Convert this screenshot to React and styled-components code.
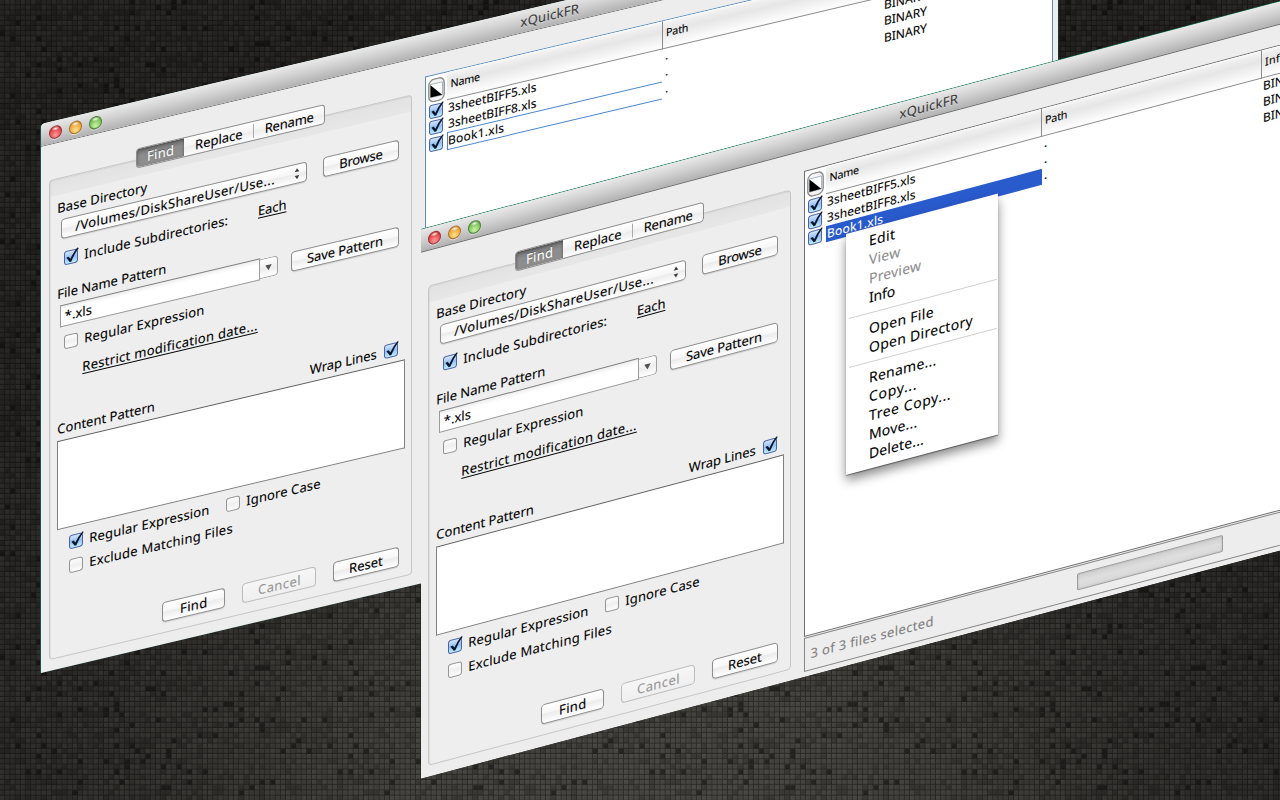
import React, { useLayoutEffect, useRef } from "react";
import styled, { createGlobalStyle, css } from "styled-components";

const GlobalStyle = createGlobalStyle`
  * { box-sizing: border-box; }
  html, body { margin: 0; padding: 0; background: #1b1a18; }
`;

const Desktop = styled.main`
  position: relative;
  width: 1280px;
  height: 800px;
  overflow: hidden;
  background: radial-gradient(ellipse 820px 640px at 50% 104%, #4b4a45 0%, #45443f 30%, #32312e 62%, #272523 100%);
  font-family: "Noto Sans", "Open Sans", sans-serif;
  font-size: 13px;
  line-height: 16px;
  color: #000;
`;

const Texture = styled.svg`
  position: absolute;
  inset: 0;
  display: block;
`;

const Window = styled.section`
  position: absolute;
  left: ${(p) => p.$x}px;
  top: ${(p) => p.$y}px;
  width: 1017px;
  height: 549px;
  display: flex;
  flex-direction: column;
  background: #ededed;
  border-radius: 4px 0 0 0;
  transform: skewY(-${(p) => p.$skew}deg);
  transform-origin: 0 0;
  ${(p) =>
    p.$front
      ? css`
          border-radius: 0;
          clip-path: inset(-1px 0 0 1px);
          box-shadow: 0 -1px 0 #24805f;
        `
      : css`
          box-shadow: -1px 0 0 #1c4f4a, 1px 0 0 #12382f;
        `}
`;

const TitleBar = styled.header`
  flex: none;
  height: 23px;
  position: relative;
  display: flex;
  align-items: center;
  justify-content: center;
  border-bottom: 1px solid #6c6c6c;
  border-radius: inherit;
  background: linear-gradient(#e9e9e9, #d2d2d2 45%, #b2b2b2);
  color: #3a3a3a;
  text-shadow: 0 1px 0 rgba(255, 255, 255, 0.4);
`;

const Lights = styled.div`
  position: absolute;
  left: 8px;
  top: 5px;
  display: flex;
  gap: 8px;
`;

const Light = styled.span`
  width: 12.5px;
  height: 12.5px;
  margin-right: -0.5px;
  border-radius: 50%;
  border: 1px solid ${(p) => p.$edge};
  background: radial-gradient(ellipse 4px 2px at 50% 18%, rgba(255, 255, 255, 0.95), rgba(255, 255, 255, 0) 100%),
    radial-gradient(circle at 50% 75%, ${(p) => p.$glow}, ${(p) => p.$base} 75%);
  box-shadow: 0 1px 0 rgba(255, 255, 255, 0.5);
`;

const Body = styled.div`
  flex: 1;
  display: flex;
  align-items: flex-start;
`;

const FormColumn = styled.div`
  width: 363px;
  margin-left: 8px;
  padding-top: 24px;
  display: flex;
  flex-direction: column;
`;

const Tabs = styled.nav`
  position: relative;
  z-index: 1;
  display: flex;
  width: 189px;
  height: 20px;
  margin: 0 0 -9px 87px;
  border: 1px solid #8d8d8d;
  border-radius: 4px;
  background: linear-gradient(#fff, #f3f3f3 50%, #ececec 51%, #fdfdfd);
  overflow: hidden;
`;

const Tab = styled.span`
  width: ${(p) => p.$w}px;
  display: flex;
  align-items: center;
  justify-content: center;
  padding-bottom: 1px;
  -webkit-text-stroke: 0.2px currentColor;
  ${(p) =>
    p.$active &&
    css`
      color: #fff;
      background: linear-gradient(#707070, #8c8c8c 40%, #8f8f8f);
      box-shadow: inset 0 1px 3px rgba(0, 0, 0, 0.45);
      text-shadow: 0 -1px 1px #555;
      -webkit-text-stroke: 0;
    `}
  ${(p) =>
    p.$divided &&
    css`
      background: linear-gradient(#aaa, #aaa) right center / 1px 14px no-repeat;
    `}
`;

const Group = styled.div`
  height: 480px;
  padding-top: 21px;
  border: 1px solid #c6c6c6;
  border-radius: 4px;
  box-shadow: inset 1px 1px 1px rgba(0, 0, 0, 0.06);
  background: linear-gradient(#e2e2e2, #e7e7e7) top / 100% 16px no-repeat #eee;
  display: flex;
  flex-direction: column;
`;

const Row = styled.div`
  flex: none;
  display: flex;
  align-items: center;
  height: ${(p) => p.$h || 16}px;
  margin-top: ${(p) => p.$mt || 0}px;
  padding-left: ${(p) => p.$pl || 7.3}px;
`;

const Spacer = styled.span`
  flex: none;
  width: ${(p) => p.$w}px;
`;

const TextBox = styled.span`
  flex: none;
  display: block;
  width: ${(p) => p.$w}px;
  white-space: nowrap;
  font-size: ${(p) => p.$size || 13}px;
  color: ${(p) => p.$color || "inherit"};
  -webkit-text-stroke: 0.1px currentColor;
  text-decoration: ${(p) => (p.$link ? "underline" : "none")};
  text-underline-offset: 2px;
  text-decoration-thickness: 1px;
  text-decoration-skip-ink: none;
  position: relative;
  top: ${(p) => p.$rise || 0}px;
`;

/* Spreads a label's letters so that it takes exactly its width. */
function Text({ children, w, ...rest }) {
  const ref = useRef(null);
  useLayoutEffect(() => {
    const el = ref.current;
    el.style.letterSpacing = "0px";
    const natural = el.offsetWidth || w;
    el.style.letterSpacing = (w - natural) / Math.max(1, children.length - 1) + "px";
  }, [children, w]);
  return (
    <TextBox $w={w} {...rest}>
      <span ref={ref}>{children}</span>
    </TextBox>
  );
}

const Button = styled.span`
  flex: none;
  width: ${(p) => p.$w}px;
  height: 20px;
  display: flex;
  align-items: center;
  justify-content: center;
  padding-bottom: 1px;
  border: 1px solid #8e8e8e;
  border-radius: 4px;
  background: linear-gradient(#fff, #f7f7f7 45%, #ececec 52%, #fff);
  box-shadow: 0 1px 1px rgba(0, 0, 0, 0.12);
  ${(p) =>
    p.$disabled &&
    css`
      color: #979797;
      border-color: #bcbcbc;
      background: linear-gradient(#f6f6f6, #efefef);
      box-shadow: none;
    `}
`;

const Combo = styled(Button)`
  justify-content: flex-start;
  padding: 0 0 0 13px;
`;

const Field = styled.span`
  flex: none;
  width: 200px;
  height: 22px;
  display: flex;
  align-items: center;
  padding-left: 3.5px;
  border: 1px solid #9b9b9b;
  border-top-color: #7e7e7e;
  background: linear-gradient(#eee, #fff 5px);
`;

const DropButton = styled.span`
  width: 18px;
  height: 20px;
  display: flex;
  align-items: center;
  justify-content: center;
  border: 1px solid #a0a0a0;
  border-left: 0;
  border-radius: 0 4px 4px 0;
  background: linear-gradient(#fff, #ededed 55%, #fff);
`;

const TextArea = styled.div`
  flex: none;
  width: 348px;
  height: 89px;
  margin: 4px 0 0 7.3px;
  border: 1px solid #808080;
  border-top-color: #5e5e5e;
  background: #fff;
`;

const CheckBox = styled.svg`
  flex: none;
  width: 14px;
  height: 14px;
  overflow: visible;
`;

function Check({ on }) {
  return (
    <CheckBox viewBox="0 0 14 14">
      <defs>
        <linearGradient id="boxOn" x1="0" y1="0" x2="0" y2="1">
          <stop offset="0" stopColor="#dbe9fb" />
          <stop offset="0.5" stopColor="#94bff0" />
          <stop offset="1" stopColor="#c3f0ff" />
        </linearGradient>
        <linearGradient id="boxOff" x1="0" y1="0" x2="0" y2="1">
          <stop offset="0" stopColor="#ffffff" />
          <stop offset="0.5" stopColor="#efefef" />
          <stop offset="1" stopColor="#ffffff" />
        </linearGradient>
      </defs>
      <rect x="0.5" y="0.5" width="13" height="13" rx="2.5" fill={on ? "url(#boxOn)" : "url(#boxOff)"} stroke={on ? "#4b62a6" : "#959595"} />
      {on && <path d="M2.4 6.8 L4.6 6.2 L6.4 8.7 Q9.4 2.8 13.4 -0.8 L14.8 -0.2 Q10.4 4.6 7.4 11.6 L5.7 11.8 Z" fill="#0a1730" />}
    </CheckBox>
  );
}

const ResultsColumn = styled.div`
  width: 628.3px;
  margin: 19.5px 0 0 13px;
  display: flex;
  flex-direction: column;
`;

const Table = styled.div`
  position: relative;
  height: 466px;
  border: 1px solid ${(p) => p.$edge};
  background: #fff;
`;

const TableRow = styled.div`
  display: grid;
  grid-template-columns: 21px 215.5px 220px 1fr;
  height: ${(p) => p.$h || 16}px;
`;

const HeadCell = styled.span`
  display: flex;
  align-items: center;
  padding: 0 0 2px 3.5px;
  border-bottom: 1px solid #8b8b8b;
  border-right: ${(p) => (p.$last ? "0" : "1px solid #8b8b8b")};
  background: linear-gradient(#fafafa, #efefef 12%, #e6e6e6 38%, #fbfbfb 92%);
`;

const IconCell = styled.span`
  display: flex;
  align-items: center;
  justify-content: center;
  padding-top: ${(p) => (p.$head ? 3 : 0)}px;
  margin-right: 1px;
`;

const Cell = styled.span`
  display: flex;
  align-items: center;
  padding-left: ${(p) => p.$pl || 1}px;
  ${(p) =>
    p.$selected &&
    css`
      color: #fff;
      background: #2a5bcd;
    `}
  ${(p) =>
    p.$focused &&
    css`
      border: solid #4a86d2;
      border-width: 1px 0 1px 1px;
      padding-left: 0;
      margin-right: 1px;
    `}
`;

const StatusBar = styled.footer`
  height: 34px;
  margin-top: 1px;
  display: flex;
  align-items: center;
  padding-left: 5.5px;
  border: 1px solid #858585;
`;

const Progress = styled.span`
  width: 146px;
  height: 17px;
  margin-left: 143.5px;
  border: 1px solid #9c9c9c;
  border-radius: 2px;
  background: linear-gradient(#cfcfcf, #dedede 50%, #d8d8d8);
  box-shadow: inset 0 0 2px rgba(0, 0, 0, 0.2);
`;

const Menu = styled.ul`
  position: absolute;
  left: 426px;
  top: 116.5px;
  width: 152px;
  height: 241.5px;
  margin: 0;
  padding: 4px 0 5px;
  list-style: none;
  background: #fff;
  box-shadow: 0 6px 10px rgba(0, 0, 0, 0.45), 0 1px 1px rgba(0, 0, 0, 0.45);
`;

const MenuItem = styled.li`
  height: 19px;
  display: flex;
  align-items: center;
  padding-left: 23px;
`;

const MenuRule = styled.li`
  height: 11.6px;
  padding: 5px 1px 0 3px;
  &::before {
    content: "";
    display: block;
    height: 1px;
    background: #cfcfcf;
  }
`;

const CELL = 5.2;
const SPAN = 60;

function shade(lowest, highest, seed) {
  let s = seed;
  let d = "";
  for (let i = 0; i < SPAN * SPAN; i++) {
    s = (s * 1103515245 + 12345) % 2147483648;
    const v = s / 2147483648;
    if (v >= lowest && v < highest) {
      const x = ((i % SPAN) * CELL).toFixed(1);
      const y = (Math.floor(i / SPAN) * CELL).toFixed(1);
      d += `M${x} ${y}h4.6v4.6h-4.6z`;
    }
  }
  return d;
}

const darkest = shade(0, 0.055, 77);
const darker = shade(0.055, 0.25, 77);
const lighter = shade(0.7, 1, 77);

function Backdrop() {
  const tile = CELL * SPAN;
  return (
    <Texture width="1280" height="800">
      <defs>
        <pattern id="mesh" width={CELL} height={CELL} patternUnits="userSpaceOnUse">
          <path d="M0 4.7H5.2M4.7 0V5.2" stroke="#000" strokeOpacity="0.42" />
          <rect x="1.3" y="1.3" width="1.8" height="1.8" fill="#000" fillOpacity="0.12" />
        </pattern>
        <pattern id="blocks" width={tile} height={tile} patternUnits="userSpaceOnUse">
          <path d={darkest} fill="#000" fillOpacity="0.45" />
          <path d={darker} fill="#000" fillOpacity="0.15" />
          <path d={lighter} fill="#fff" fillOpacity="0.025" />
        </pattern>
      </defs>
      <rect width="1280" height="800" fill="url(#blocks)" />
      <rect width="1280" height="800" fill="url(#mesh)" />
    </Texture>
  );
}

function SearchForm() {
  return (
    <FormColumn>
      <Tabs>
        <Tab $w={47} $active><Text w={27}>Find</Text></Tab>
        <Tab $w={71} $divided><Text w={48}>Replace</Text></Tab>
        <Tab $w={70}><Text w={49}>Rename</Text></Tab>
      </Tabs>
      <Group>
        <Row><Text w={90}>Base Directory</Text></Row>
        <Row $h={20} $mt={4} $pl={11.3}>
          <Combo $w={245.5}>
            <Text w={199.5}>/Volumes/DiskShareUser/Use...</Text>
            <Spacer $w={19.5} />
            <svg width="6" height="12" viewBox="0 0 6 12">
              <path d="M3 0.5 L5.3 4.2 H0.7Z M3 11.5 L5.3 7.8 H0.7Z" fill="#3c3c3c" />
            </svg>
          </Combo>
          <Spacer $w={16.5} />
          <Button $w={75.5}><Text w={43.5}>Browse</Text></Button>
        </Row>
        <Row $h={20} $mt={10} $pl={14.3}>
          <Check on />
          <Spacer $w={6} />
          <Text w={143.5}>Include Subdirectories:</Text>
          <Spacer $w={30.2} />
          <Text w={28.7} $link $rise={-2}>Each</Text>
        </Row>
        <Row $mt={16}><Text w={109.5}>File Name Pattern</Text></Row>
        <Row $h={22} $mt={4} $pl={10.3}>
          <Field><Text w={27}>*.xls</Text></Field>
          <DropButton>
            <svg width="7" height="6" viewBox="0 0 7 6"><path d="M0.3 0.3H6.7L3.5 5.8Z" fill="#505050" /></svg>
          </DropButton>
          <Spacer $w={13} />
          <Button $w={107.4}><Text w={76}>Save Pattern</Text></Button>
        </Row>
        <Row $mt={8} $pl={14.3}>
          <Check />
          <Spacer $w={6} />
          <Text w={120}>Regular Expression</Text>
        </Row>
        <Row $mt={12} $pl={32.3}><Text w={175} $link>Restrict modification date...</Text></Row>
        <Row $mt={41}>
          <Text w={98}>Content Pattern</Text>
          <Spacer $w={154.5} />
          <Text w={67.5}>Wrap Lines</Text>
          <Spacer $w={7} />
          <Check on />
        </Row>
        <TextArea />
        <Row $mt={7} $pl={19}>
          <Check on />
          <Spacer $w={6.3} />
          <Text w={120}>Regular Expression</Text>
          <Spacer $w={16.7} />
          <Check />
          <Spacer $w={6.3} />
          <Text w={74}>Ignore Case</Text>
        </Row>
        <Row $mt={8} $pl={19}>
          <Check />
          <Spacer $w={6.3} />
          <Text w={143.3}>Exclude Matching Files</Text>
        </Row>
        <Row $h={20} $mt={50} $pl={112.3}>
          <Button $w={62.5}><Text w={27}>Find</Text></Button>
          <Spacer $w={17.5} />
          <Button $w={73.5} $disabled><Text w={42}>Cancel</Text></Button>
          <Spacer $w={17.5} />
          <Button $w={65.5}><Text w={34}>Reset</Text></Button>
        </Row>
      </Group>
    </FormColumn>
  );
}

const files = ["3sheetBIFF5.xls", "3sheetBIFF8.xls", "Book1.xls"];

function Results({ front }) {
  return (
    <ResultsColumn>
      <Table $edge={front ? "#6e6e6e" : "#5c8dbb"}>
        <TableRow $h={28.5}>
          <IconCell $head>
            <svg width="17" height="24" viewBox="0 0 17 24">
              <rect x="0.8" y="0.8" width="15.4" height="22.4" rx="5.5" fill="#f4f4f4" stroke="#8d8d8d" strokeWidth="1.4" />
              <rect x="2.5" y="5.5" width="12" height="13" fill="#fff" stroke="#9ab" strokeWidth="0.8" />
              <path d="M2.5 6 V18.3 H14.2 Z" fill="#000" />
            </svg>
          </IconCell>
          <HeadCell><Text w={29.5} $size={10.7}>Name</Text></HeadCell>
          <HeadCell><Text w={22.5} $size={10.7}>Path</Text></HeadCell>
          <HeadCell $last><Text w={21} $size={10.7}>Info</Text></HeadCell>
        </TableRow>
        {files.map((name, i) => (
          <TableRow key={name}>
            <IconCell><Check on /></IconCell>
            <Cell $selected={front && i === 2} $focused={!front && i === 2}>
              <Text w={i === 2 ? 56 : 89} $size={12}>{name}</Text>
            </Cell>
            <Cell $pl={2.5}><Text w={3} $size={12} $rise={-1}>.</Text></Cell>
            <Cell $pl={1.5}><Text w={43} $size={12} $rise={-0.5}>BINARY</Text></Cell>
          </TableRow>
        ))}
      </Table>
      <StatusBar>
        <Text w={123} $color="#808080">3 of 3 files selected</Text>
        <Progress />
      </StatusBar>
    </ResultsColumn>
  );
}

const menuGroups = [
  [["Edit", 26], ["View", 31.5, true], ["Preview", 52, true], ["Info", 26.5]],
  [["Open File", 64.5], ["Open Directory", 103.5]],
  [["Rename...", 67], ["Copy...", 47], ["Tree Copy...", 82], ["Move...", 48], ["Delete...", 55]],
];

function ContextMenu() {
  return (
    <Menu>
      {menuGroups.map((items, g) => (
        <React.Fragment key={g}>
          {g > 0 && <MenuRule />}
          {items.map(([label, w, off]) => (
            <MenuItem key={label}>
              <Text w={w} $size={14} $color={off ? "#8c8c8c" : "#000"}>{label}</Text>
            </MenuItem>
          ))}
        </React.Fragment>
      ))}
    </Menu>
  );
}

function AppWindow({ front, x, y, skew }) {
  return (
    <Window $x={x} $y={y} $skew={skew} $front={front}>
      <TitleBar>
        <Lights>
          <Light $edge="#9c3436" $base="#d8343b" $glow="#ff9a98" />
          <Light $edge="#a6722a" $base="#e8992c" $glow="#ffe08a" />
          <Light $edge="#4d8038" $base="#6cb548" $glow="#c9f5a4" />
        </Lights>
        <Text w={58}>xQuickFR</Text>
      </TitleBar>
      <Body>
        <SearchForm />
        <Results front={front} />
      </Body>
      {front && <ContextMenu />}
    </Window>
  );
}

export default function App() {
  return (
    <Desktop>
      <GlobalStyle />
      <Backdrop />
      <AppWindow x={41} y={124} skew={13.27} />
      <AppWindow x={420} y={230.3} skew={14.87} front />
    </Desktop>
  );
}
